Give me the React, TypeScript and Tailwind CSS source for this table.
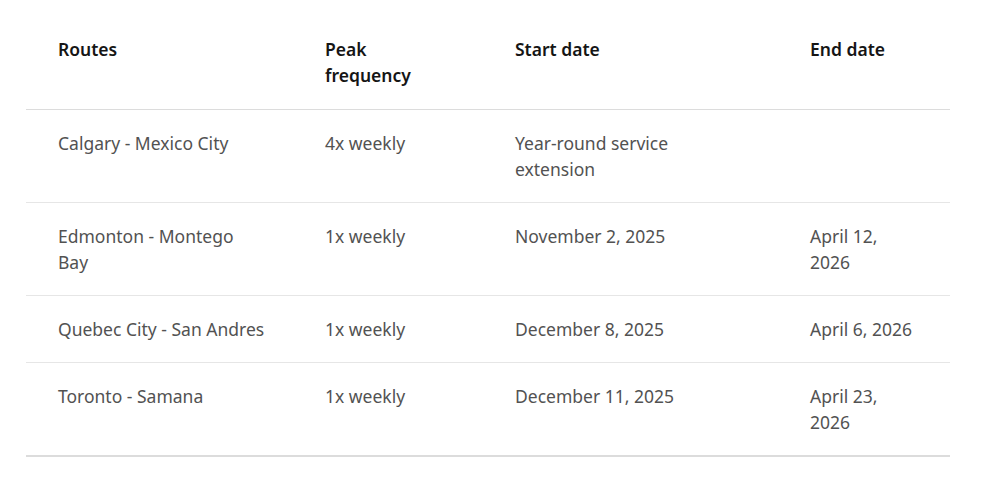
import React from "react";

const rows = [
  ["Calgary - Mexico City", "4x weekly", "Year-round service extension", ""],
  ["Edmonton - Montego Bay", "1x weekly", "November 2, 2025", "April 12, 2026"],
  ["Quebec City - San Andres", "1x weekly", "December 8, 2025", "April 6, 2026"],
  ["Toronto - Samana", "1x weekly", "December 11, 2025", "April 23, 2026"],
];

const pad = ["pl-8 pr-[27px]", "px-8", "px-8", "px-8"];

export default function App() {
  return (
    <div
      className="w-[1000px] h-[489px] bg-white pt-[17px] pl-[26px]"
      style={{ fontFamily: '"Noto Sans", "Open Sans", sans-serif' }}
    >
      <table className="table-fixed w-[924px] border-collapse text-[17.5px] leading-[26px]">
        <colgroup>
          <col className="w-[267px]" />
          <col className="w-[190px]" />
          <col className="w-[295px]" />
          <col className="w-[172px]" />
        </colgroup>
        <thead>
          <tr className="border-b border-[#dcdcdc]">
            {["Routes", "Peak frequency", "Start date", "End date"].map((h, j) => (
              <th
                key={h}
                className={`${pad[j]} pt-[19px] pb-[21px] text-left align-top font-semibold text-[#151515]`}
              >
                {h}
              </th>
            ))}
          </tr>
        </thead>
        <tbody>
          {rows.map((r, i) => (
            <tr
              key={i}
              className={
                i === rows.length - 1
                  ? "border-b-2 border-[#dcdcdc]"
                  : "border-b border-[#e6e6e6]"
              }
            >
              {r.map((c, j) => (
                <td key={j} className={`${pad[j]} py-5 align-top text-[#525252]`}>
                  {c}
                </td>
              ))}
            </tr>
          ))}
        </tbody>
      </table>
    </div>
  );
}
